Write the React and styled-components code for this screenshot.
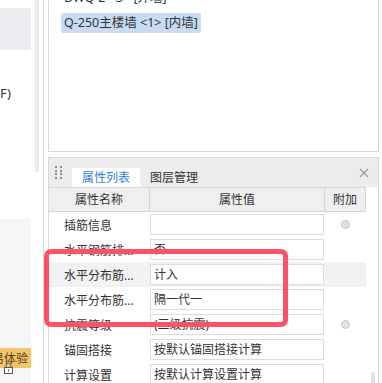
import React from "react";
import styled, { createGlobalStyle } from "styled-components";

const Global = createGlobalStyle`
  html, body { margin: 0; padding: 0; background: #fff; overflow: hidden; }
  * { box-sizing: border-box; }
`;

const FONT = `"Noto Sans", "Noto Sans CJK SC", sans-serif`;

const Page = styled.div`
  position: relative;
  display: flex;
  width: 382px;
  height: 383px;
  overflow: hidden;
  background: #fff;
  font-family: ${FONT};
  color: #333;
`;

const LeftPane = styled.div`
  width: 44px;
  height: 100%;
  flex-shrink: 0;
  display: flex;
  gap: 4px;
  border-right: 1px solid #dadada;
`;

const LeftContent = styled.div`
  width: 31px;
  height: 100%;
  display: flex;
  flex-direction: column;
  padding-top: 8px;
  overflow: hidden;
`;

const GreyBlock = styled.div`
  height: 42px;
  flex-shrink: 0;
  background: #ebedf0;
`;

const LeftLabel = styled.div`
  margin-top: 36px;
  height: 14px;
  line-height: 14px;
  font-size: 13px;
  white-space: nowrap;
  color: #333;
`;

const BottomArea = styled.div`
  position: relative;
  margin-top: auto;
  height: 165px;
  flex-shrink: 0;
  background: #f5f6f8;
  padding-top: 130px;
`;

const Badge = styled.div`
  height: 20px;
  background: #f2c46b;
  display: flex;
  justify-content: flex-end;
  align-items: center;
  padding-right: 3px;
  font-size: 12px;
  color: #5a3b10;
  white-space: nowrap;
  overflow: hidden;
`;

const LockIcon = styled.svg`
  position: absolute;
  left: 4px;
  top: 144px;
`;

const LeftScroll = styled.div`
  width: 4px;
  height: 172px;
  background: #e9e9e9;
  border-radius: 0 0 2px 2px;
`;

const RightPane = styled.div`
  margin-left: 4px;
  width: 331px;
  height: 100%;
  flex-shrink: 0;
  display: flex;
  flex-direction: column;
  gap: 5px;
`;

const UpperPanel = styled.div`
  height: 152px;
  flex-shrink: 0;
  border: 1px solid #d9d9d9;
  border-top: none;
  overflow: hidden;
`;

const List = styled.div`
  margin-top: -12px;
  padding: 0 12px;
  display: flex;
  flex-direction: column;
  align-items: flex-start;
  gap: 5px;
`;

const ListItem = styled.div`
  height: 20px;
  line-height: 20px;
  padding: 0 3px;
  border-radius: 3px;
  font-size: 12.5px;
  white-space: nowrap;
  color: #333;
  background: ${(p) => (p.$selected ? "#c6dcf2" : "transparent")};
`;

const LowerPanel = styled.div`
  flex: 1;
  min-height: 0;
  overflow: hidden;
  border: 1px solid #d9d9d9;
  border-bottom: none;
  display: flex;
  flex-direction: column;
`;

const TabBar = styled.div`
  height: 29px;
  flex-shrink: 0;
  background: #ececec;
  display: flex;
  align-items: flex-end;
  padding-left: 6px;
`;

const Handle = styled.div`
  display: grid;
  grid-template-columns: 2px 2px;
  grid-auto-rows: 2px;
  column-gap: 3px;
  row-gap: 1.7px;
  margin-bottom: 8px;
  span {
    width: 2px;
    height: 2px;
    background: #8a8a8a;
  }
`;

const Tab = styled.div`
  height: 19px;
  line-height: 19px;
  font-size: 12px;
  white-space: nowrap;
  text-align: center;
  margin-left: ${(p) => (p.$active ? "10px" : "0")};
  width: ${(p) => (p.$active ? "68px" : "auto")};
  padding: ${(p) => (p.$active ? "0" : "0 10px")};
  background: ${(p) => (p.$active ? "#fff" : "transparent")};
  color: ${(p) => (p.$active ? "#2f7fe6" : "#333")};
`;

const Close = styled.div`
  margin-left: auto;
  margin-right: 9px;
  align-self: center;
  display: flex;
`;

const Header = styled.div`
  display: grid;
  flex-shrink: 0;
  grid-template-columns: 101px 175px 41px;
  width: 317px;
`;

const HeadCell = styled.div`
  height: 25px;
  line-height: 23px;
  background: #efefef;
  border-top: 1px solid #d8d8d8;
  border-bottom: 1px solid #d5d5d5;
  border-right: 1px solid #d5d5d5;
  text-align: center;
  font-size: 12px;
  color: #333;
`;

const Body = styled.div`
  display: flex;
  flex-shrink: 0;
`;

const Rows = styled.div`
  width: 317px;
  display: flex;
  flex-direction: column;
`;

const Row = styled.div`
  display: grid;
  grid-template-columns: 101px 175px 41px;
  height: 25px;
  align-items: center;
  flex-shrink: 0;
  background: ${(p) => (p.$hl ? "#f2f2f2" : "transparent")};
`;

const Label = styled.div`
  padding-left: 15px;
  font-size: 12px;
  white-space: nowrap;
  color: #333;
`;

const ValueBox = styled.div`
  width: 174px;
  height: 21px;
  line-height: 19px;
  border: 1px solid #dcdcdc;
  background: #fff;
  padding-left: 3px;
  font-size: 12px;
  white-space: nowrap;
  color: #333;
`;

const ExtraCell = styled.div`
  display: flex;
  justify-content: center;
`;

const Radio = styled.div`
  width: 9px;
  height: 9px;
  border-radius: 50%;
  background: #e2e2e2;
  border: 1px solid #c5c5c5;
`;

const Track = styled.div`
  flex: 1;
  display: flex;
  justify-content: center;
  padding-left: 1px;
`;

const Thumb = styled.div`
  margin-top: 160px;
  width: 4px;
  height: 20px;
  border-radius: 2px;
  background: #e2e2e2;
`;

const Annotation = styled.div`
  position: absolute;
  left: 44px;
  top: 249px;
  width: 244px;
  height: 78px;
  border: 5px solid #fc5267;
  border-radius: 7px;
  pointer-events: none;
`;

const rows = [
  { label: "插筋信息", value: "", radio: true },
  { label: "水平钢筋排...", value: "否" },
  { label: "水平分布筋...", value: "计入", hl: true },
  { label: "水平分布筋...", value: "隔一代一" },
  { label: "抗震等级", value: "(三级抗震)", radio: true },
  { label: "锚固搭接", value: "按默认锚固搭接计算" },
  { label: "计算设置", value: "按默认计算设置计算" },
];

export default function App() {
  return (
    <Page>
      <Global />
      <LeftPane>
        <LeftContent>
          <GreyBlock />
          <LeftLabel>F)</LeftLabel>
          <BottomArea>
            <Badge>简易体验</Badge>
            <LockIcon width="9" height="12" viewBox="0 0 9 12">
              <path d="M2 5.5V3.5a2.5 2.5 0 0 1 5 0v2" fill="none" stroke="#555" strokeWidth="1" />
              <rect x="0.5" y="5.5" width="8" height="6" fill="#fff" stroke="#555" strokeWidth="1" />
              <rect x="4" y="7.5" width="1" height="2" fill="#555" />
            </LockIcon>
          </BottomArea>
        </LeftContent>
        <LeftScroll />
      </LeftPane>
      <RightPane>
        <UpperPanel>
          <List>
            <ListItem>DWQ-2 &lt;3&gt; [外墙]</ListItem>
            <ListItem $selected>Q-250主楼墙 &lt;1&gt; [内墙]</ListItem>
          </List>
        </UpperPanel>
        <LowerPanel>
          <TabBar>
            <Handle>
              {Array.from({ length: 8 }).map((_, i) => (
                <span key={i} />
              ))}
            </Handle>
            <Tab $active>属性列表</Tab>
            <Tab>图层管理</Tab>
            <Close>
              <svg width="10" height="10" viewBox="0 0 10 10">
                <path d="M1 1L9 9M9 1L1 9" stroke="#9a9a9a" strokeWidth="1.1" />
              </svg>
            </Close>
          </TabBar>
          <Header>
            <HeadCell>属性名称</HeadCell>
            <HeadCell>属性值</HeadCell>
            <HeadCell>附加</HeadCell>
          </Header>
          <Body>
            <Rows>
              {rows.map((r, i) => (
                <Row key={i} $hl={r.hl}>
                  <Label>{r.label}</Label>
                  <ValueBox>{r.value}</ValueBox>
                  <ExtraCell>{r.radio && <Radio />}</ExtraCell>
                </Row>
              ))}
            </Rows>
            <Track>
              <Thumb />
            </Track>
          </Body>
        </LowerPanel>
      </RightPane>
      <Annotation />
    </Page>
  );
}
